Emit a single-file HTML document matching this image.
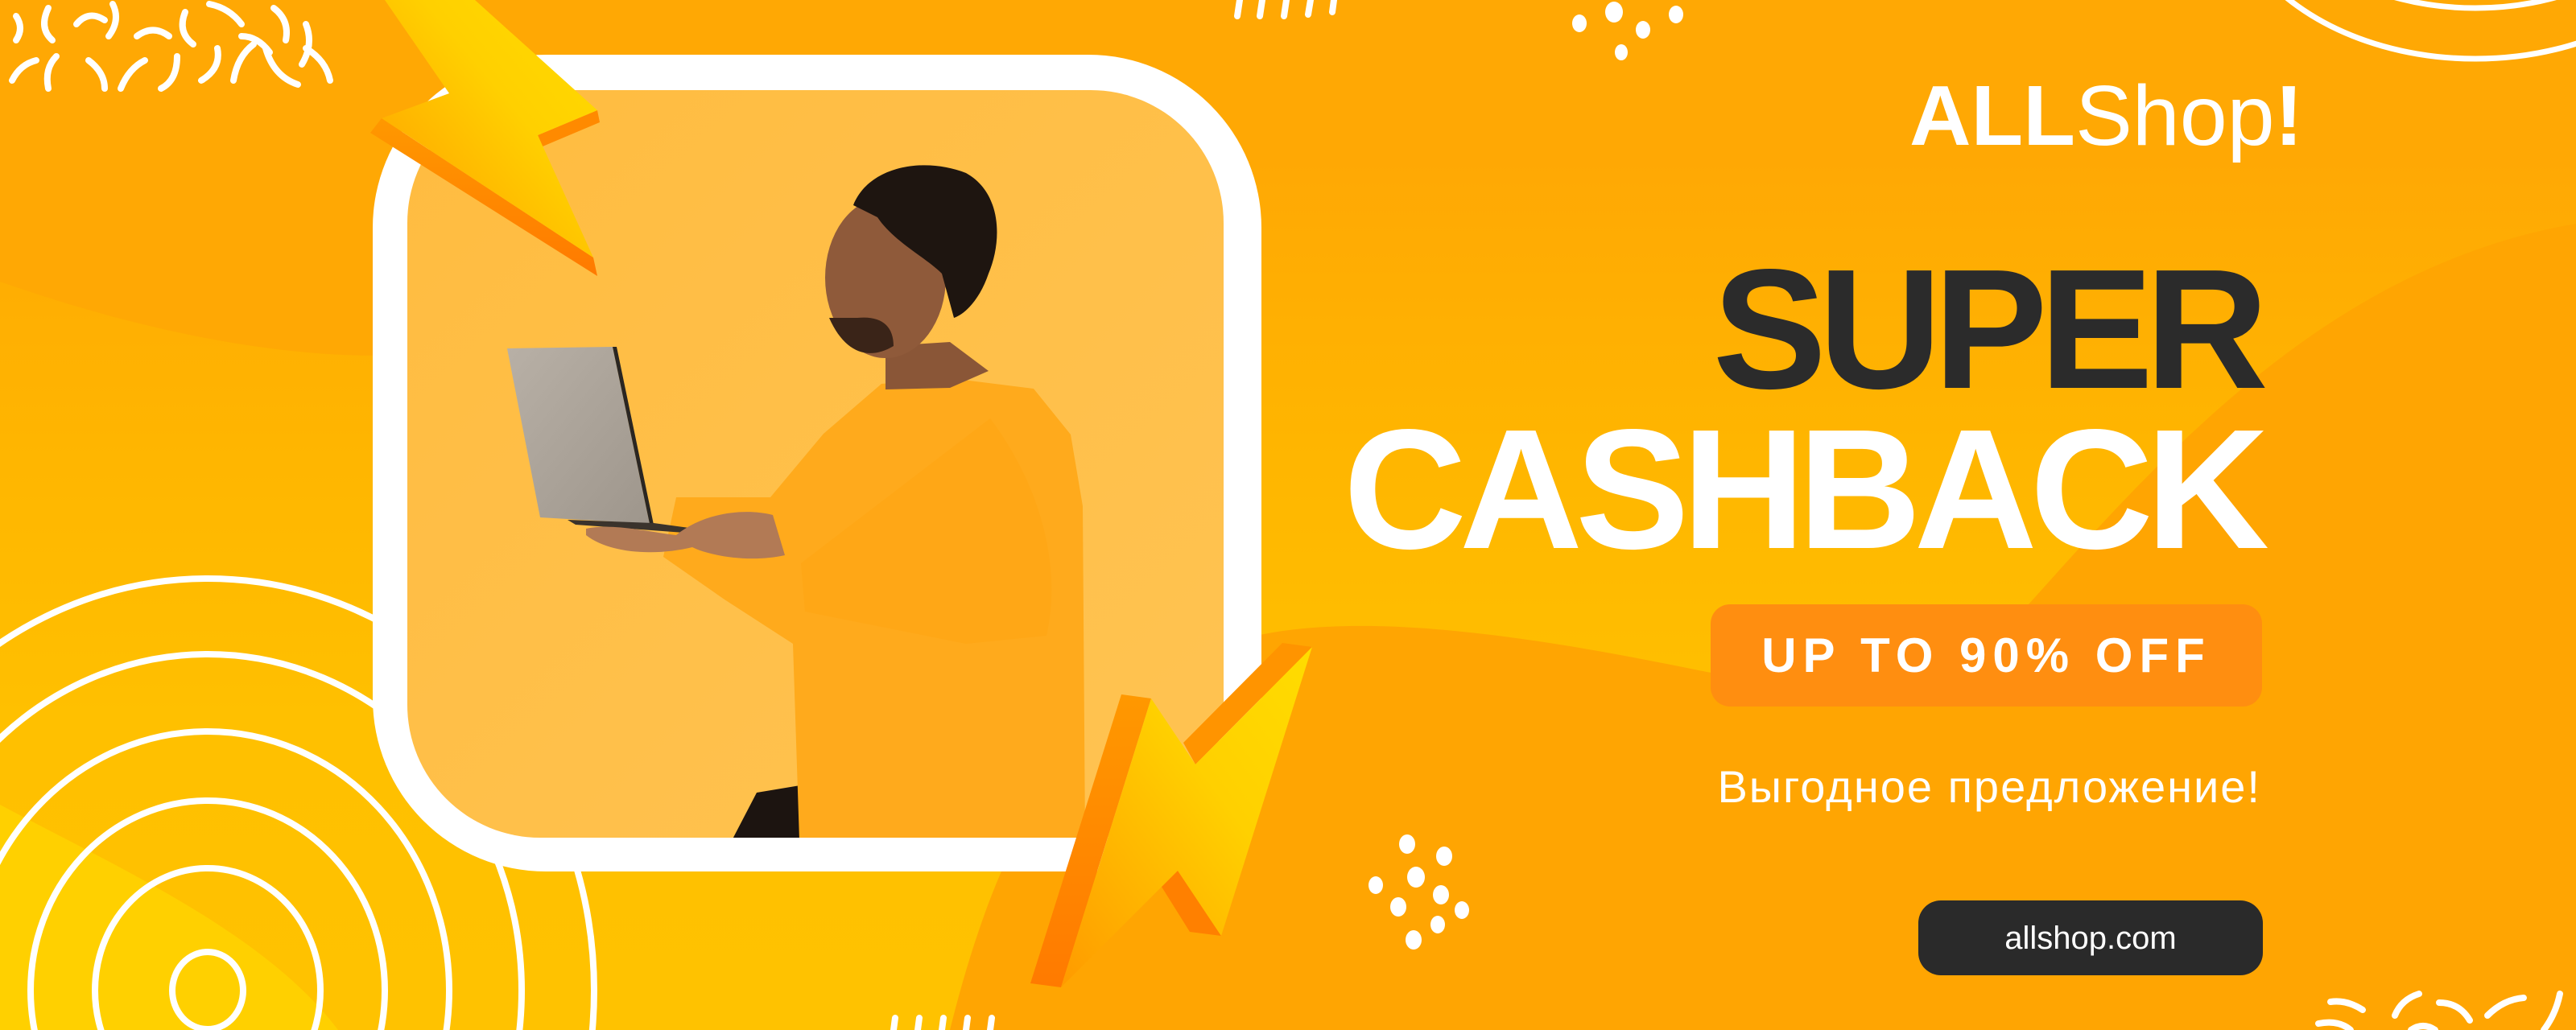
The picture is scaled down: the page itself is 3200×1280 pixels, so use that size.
<!DOCTYPE html>
<html><head><meta charset="utf-8"><style>
html,body{margin:0;padding:0;width:3200px;height:1280px;overflow:hidden}
body{position:relative;background:#FFA804;font-family:"Liberation Sans",sans-serif}
svg{position:absolute;left:0;top:0;display:block}
.t{position:absolute;white-space:nowrap;line-height:1}
</style></head><body>
<svg width="3200" height="1280" viewBox="0 0 3200 1280">
<defs>
<linearGradient id="yel" x1="0" y1="0" x2="0" y2="1">
<stop offset="0.15" stop-color="#FFA804"/><stop offset="0.45" stop-color="#FFB600"/><stop offset="0.7" stop-color="#FFC000"/><stop offset="1" stop-color="#FFC200"/></linearGradient>
<linearGradient id="photo" x1="0" y1="0" x2="1" y2="1"><stop offset="0" stop-color="#FFBC40"/><stop offset="1" stop-color="#FFC352"/></linearGradient>
<linearGradient id="bf" x1="0" y1="1" x2="1" y2="0"><stop offset="0" stop-color="#FF9A00"/><stop offset="0.6" stop-color="#FFD000"/><stop offset="1" stop-color="#FFDC00"/></linearGradient>
<linearGradient id="bs" x1="0" y1="0" x2="0" y2="1"><stop offset="0" stop-color="#FF9800"/><stop offset="1" stop-color="#FF7A00"/></linearGradient>
<linearGradient id="lap" x1="0" y1="0" x2="1" y2="1"><stop offset="0" stop-color="#b8b0a6"/><stop offset="1" stop-color="#9e968c"/></linearGradient>
<clipPath id="pc"><rect x="506" y="112" width="1014" height="929" rx="165"/></clipPath>
<clipPath id="all"><rect width="3200" height="1280"/></clipPath>
</defs>
<g clip-path="url(#all)">
<rect width="3200" height="1280" fill="url(#yel)"/>
<path d="M0,0 L520,0 L520,440 C380,450 200,420 0,350 Z" fill="#FFA804"/>
<path d="M3200,278 C2900,330 2700,550 2520,751 C2400,870 2250,860 2110,833 C1900,790 1700,760 1560,790 C1350,850 1250,1000 1180,1280 L3200,1280 Z" fill="#FFA502"/>
<path d="M0,1000 C150,1080 330,1160 420,1280 L0,1280 Z" fill="#FFD000"/>
<g fill="none" stroke="#fff" stroke-width="8">
<ellipse cx="258" cy="1231" rx="44" ry="48"/>
<ellipse cx="258" cy="1231" rx="140" ry="152"/>
<ellipse cx="258" cy="1231" rx="220" ry="236"/>
<ellipse cx="258" cy="1231" rx="300" ry="322"/>
<ellipse cx="258" cy="1231" rx="390" ry="418"/>
<ellipse cx="258" cy="1231" rx="480" ry="512"/>
<ellipse cx="3075" cy="-150" rx="312" ry="223" stroke-width="7"/>
<ellipse cx="3075" cy="-150" rx="250" ry="160" stroke-width="7"/>
</g>
<g fill="none" stroke="#fff" stroke-width="8" stroke-linecap="round">
<path d="M20,20 q10,15 0,30"/><path d="M60,10 q-12,25 5,40"/><path d="M95,30 q15,-18 35,-5"/><path d="M140,5 q10,20 -5,40"/><path d="M170,45 q20,-15 40,0"/><path d="M230,15 q-10,25 10,40"/><path d="M260,5 q25,5 40,25"/><path d="M300,45 q20,0 35,20"/><path d="M340,10 q20,15 15,40"/><path d="M380,30 q10,25 -5,50"/>
<path d="M15,100 q10,-20 30,-25"/><path d="M60,110 q-5,-25 10,-40"/><path d="M110,75 q20,15 20,35"/><path d="M150,110 q10,-25 30,-35"/><path d="M220,70 q0,30 -20,40"/><path d="M250,100 q25,-15 20,-40"/><path d="M290,100 q5,-30 25,-45"/><path d="M330,60 q10,35 40,45"/><path d="M380,60 q25,15 30,40"/>
<path d="M1537,20 l3,-20"/><path d="M1565,20 l3,-20"/><path d="M1595,20 l3,-20"/><path d="M1625,18 l3,-18"/><path d="M1655,15 l2,-15"/>
<path d="M1110,1280 l2,-15"/><path d="M1140,1280 l2,-15"/><path d="M1170,1280 l2,-15"/><path d="M1200,1280 l2,-15"/><path d="M1230,1280 l2,-15"/>
<path d="M2895,1245 q20,-3 40,10"/><path d="M2880,1272 q25,-5 40,8"/><path d="M2975,1262 q8,-20 30,-27"/><path d="M3030,1246 q25,0 38,22"/><path d="M2995,1280 q15,-10 30,0"/><path d="M3090,1262 q20,-20 45,-22"/><path d="M3180,1235 q-5,25 -20,45"/>
</g>
<g fill="#fff">
<ellipse cx="1962" cy="29" rx="9" ry="11"/><ellipse cx="2005" cy="15" rx="11" ry="13"/><ellipse cx="2041" cy="37" rx="9" ry="11"/><ellipse cx="2082" cy="18" rx="9" ry="11"/><ellipse cx="2014" cy="65" rx="8" ry="10"/>
<ellipse cx="1748" cy="1049" rx="10" ry="12"/><ellipse cx="1794" cy="1064" rx="10" ry="12"/><ellipse cx="1709" cy="1100" rx="9" ry="11"/><ellipse cx="1759" cy="1090" rx="11" ry="13"/><ellipse cx="1790" cy="1112" rx="10" ry="12"/><ellipse cx="1737" cy="1127" rx="10" ry="12"/><ellipse cx="1816" cy="1131" rx="9" ry="11"/><ellipse cx="1786" cy="1149" rx="9" ry="11"/><ellipse cx="1756" cy="1168" rx="10" ry="12"/>
</g>
<rect x="463" y="68" width="1104" height="1015" rx="215" fill="#fff"/>
<rect x="506" y="112" width="1014" height="929" rx="165" fill="url(#photo)"/>
<g clip-path="url(#pc)">
<path d="M901,1060 L940,985 L1000,975 L1110,1060 Z" fill="#1c1410"/>
<path d="M1095,477 L1180,470 L1284,483 L1330,540 L1345,629 L1348,1044 L993,1044 L985,800 L900,745 L824,692 L840,618 L957,618 L1023,539 Z" fill="#FFAA1C"/>
<path d="M1230,520 C1290,600 1320,700 1300,790 L1200,800 L1000,760 L995,700 Z" fill="#FFA514" opacity="0.7"/>
<path d="M1100,430 L1180,425 L1228,461 L1180,482 L1100,484 Z" fill="#8a5637"/>
<ellipse cx="1100" cy="345" rx="75" ry="100" fill="#8f5a3a"/>
<path d="M1060,255 C1080,205 1150,195 1200,215 C1245,240 1245,300 1228,340 C1218,370 1200,390 1185,395 L1170,340 C1150,320 1110,300 1090,270 Z" fill="#1e1510"/>
<path d="M1030,395 C1050,440 1080,448 1110,430 C1110,405 1095,392 1065,395 Z" fill="#3a2418"/>
<path d="M630,433 L761,431 L807,651 L671,643 Z" fill="url(#lap)"/>
<path d="M761,431 L766,431 L812,652 L807,651 Z" fill="#2a2622"/>
<path d="M705,646 L812,650 L856,656 L850,662 L715,652 Z" fill="#3a332c"/>
<path d="M728,657 C760,650 800,660 840,665 C870,640 920,630 960,640 L975,690 C930,700 880,690 860,680 C820,690 760,690 728,665 Z" fill="#b27a55"/>
</g>
<polygon points="474,147 737,320 742,343 460,165" fill="url(#bs)"/>
<polygon points="742,137 745,152 674,182 668,168" fill="#FF8A00"/>
<polygon points="478,0 590,0 742,137 668,168 737,320 474,147 558,116" fill="url(#bf)"/>
<polygon points="1393,863 1430,868 1318,1227 1280,1222" fill="url(#bs)"/>
<polygon points="1593,799 1630,804 1485,950 1470,923" fill="#FF9400"/>
<polygon points="1443,1102 1463,1082 1517,1163 1478,1158" fill="#FF8000"/>
<polygon points="1430,868 1485,950 1630,804 1517,1163 1463,1082 1318,1227" fill="url(#bf)"/>
<rect x="2125" y="751" width="685" height="127" rx="24" fill="#FF8E10"/>
<rect x="2383" y="1119" width="428" height="93" rx="28" fill="#2a2a2a"/>
</g>
</svg>
<div class="t" style="left:2372px;top:91px;font-size:106px;color:#fff"><b>ALL</b>Shop<b>!</b></div>
<div class="t" style="right:392px;top:303px;font-size:212px;font-weight:bold;color:#2b2b2b;letter-spacing:-10px">SUPER</div>
<div class="t" style="right:390px;top:502px;font-size:212px;font-weight:bold;color:#fff;letter-spacing:-9px">CASHBACK</div>
<div class="t" style="left:2125px;top:751px;width:685px;height:127px;display:flex;align-items:center;justify-content:center;font-size:60px;font-weight:bold;color:#fff;letter-spacing:8px">UP TO 90% OFF</div>
<div class="t" style="right:391px;top:950px;font-size:56px;color:#fff;letter-spacing:2px">Выгодное предложение!</div>
<div class="t" style="left:2383px;top:1119px;width:428px;height:93px;display:flex;align-items:center;justify-content:center;font-size:40px;color:#fff">allshop.com</div>
</body></html>
